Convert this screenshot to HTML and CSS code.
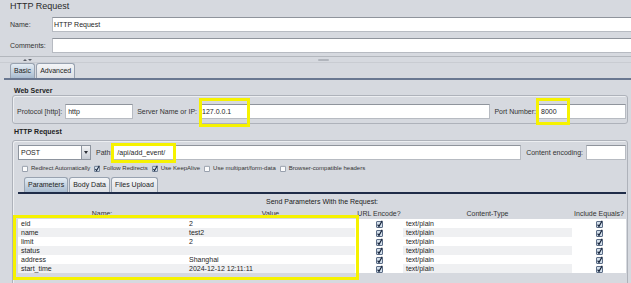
FILE: index.html
```html
<!DOCTYPE html>
<html lang="en">
<head>
  <meta charset="UTF-8">
  <title>HTTP Request</title>
  <link rel="stylesheet" href="styles.css">
</head>
<body>
  <svg class="defs" width="0" height="0">
    <symbol id="cb-on" viewBox="0 0 7 8">
      <rect x="0.5" y="1.5" width="6" height="6" rx="0.5" fill="#d3dfeb" stroke="#5d6e87"/>
      <path d="M1.6 4.6 L3 6.4 L6.2 0.8" fill="none" stroke="#15233a" stroke-width="1.2"/>
    </symbol>
    <symbol id="cb-off" viewBox="0 0 7 8">
      <rect x="0.5" y="1.5" width="6" height="6" rx="0.5" fill="#fbfbfc" stroke="#8a93a1"/>
    </symbol>
  </svg>

  <div class="page">
    <div class="title">HTTP Request</div>

    <div class="meta">
      <div class="meta-row"><span class="meta-label">Name:</span><div class="field">HTTP Request</div></div>
      <div class="meta-row"><span class="meta-label">Comments:</span><div class="field"></div></div>
    </div>

    <div class="divider">
      <span class="arrow up"></span><span class="arrow down"></span>
      <span class="grip"></span>
    </div>

    <div class="tabs top-tabs">
      <span class="tab active">Basic</span>
      <span class="tab">Advanced</span>
    </div>

    <div class="tab-body">
      <div class="group-title">Web Server</div>
      <div class="group server">
        <span class="lbl">Protocol [http]:</span>
        <div class="field protocol">http</div>
        <span class="lbl">Server Name or IP:</span>
        <div class="field host">127.0.0.1</div>
        <span class="lbl">Port Number:</span>
        <div class="field port">8000</div>
      </div>

      <div class="group-title second">HTTP Request</div>
      <div class="group request">
        <div class="req-row">
          <div class="combo"><span class="combo-text">POST</span><span class="combo-btn"><i></i></span></div>
          <span class="lbl path-lbl">Path:</span>
          <div class="field path">/api/add_event/</div>
          <span class="lbl enc-lbl">Content encoding:</span>
          <div class="field enc"></div>
        </div>

        <div class="options">
          <span class="opt"><svg class="cb"><use href="#cb-off"/></svg>Redirect Automatically</span>
          <span class="opt"><svg class="cb"><use href="#cb-on"/></svg>Follow Redirects</span>
          <span class="opt"><svg class="cb"><use href="#cb-on"/></svg>Use KeepAlive</span>
          <span class="opt"><svg class="cb"><use href="#cb-off"/></svg>Use multipart/form-data</span>
          <span class="opt"><svg class="cb"><use href="#cb-off"/></svg>Browser-compatible headers</span>
        </div>

        <div class="tabs sub-tabs">
          <span class="tab active">Parameters</span>
          <span class="tab">Body Data</span>
          <span class="tab">Files Upload</span>
        </div>

        <div class="caption">Send Parameters With the Request:</div>

        <table class="params">
          <colgroup>
            <col class="c-name"><col class="c-value"><col class="c-enc"><col class="c-type"><col class="c-eq">
          </colgroup>
          <thead>
            <tr><th>Name:</th><th>Value</th><th>URL Encode?</th><th>Content-Type</th><th>Include Equals?</th></tr>
          </thead>
          <tbody>
            <tr><td>eid</td><td>2</td><td class="chk"><svg class="cb"><use href="#cb-on"/></svg></td><td>text/plain</td><td class="chk"><svg class="cb"><use href="#cb-on"/></svg></td></tr>
            <tr><td>name</td><td>test2</td><td class="chk"><svg class="cb"><use href="#cb-on"/></svg></td><td>text/plain</td><td class="chk"><svg class="cb"><use href="#cb-on"/></svg></td></tr>
            <tr><td>limit</td><td>2</td><td class="chk"><svg class="cb"><use href="#cb-on"/></svg></td><td>text/plain</td><td class="chk"><svg class="cb"><use href="#cb-on"/></svg></td></tr>
            <tr><td>status</td><td></td><td class="chk"><svg class="cb"><use href="#cb-on"/></svg></td><td>text/plain</td><td class="chk"><svg class="cb"><use href="#cb-on"/></svg></td></tr>
            <tr><td>address</td><td>Shanghai</td><td class="chk"><svg class="cb"><use href="#cb-on"/></svg></td><td>text/plain</td><td class="chk"><svg class="cb"><use href="#cb-on"/></svg></td></tr>
            <tr><td>start_time</td><td>2024-12-12 12:11:11</td><td class="chk"><svg class="cb"><use href="#cb-on"/></svg></td><td>text/plain</td><td class="chk"><svg class="cb"><use href="#cb-on"/></svg></td></tr>
          </tbody>
        </table>
      </div>
    </div>

    <!-- yellow annotation boxes drawn over the screenshot -->
    <div class="mark mark-ip"></div>
    <div class="mark mark-port"></div>
    <div class="mark mark-path"></div>
    <div class="mark mark-table"></div>
  </div>
</body>
</html>
```

FILE: styles.css
```css
body {
  margin: 0;
  background-color: #d6d9df;
  font-family: "Liberation Sans", Arial, sans-serif;
  font-size: 7px;
  color: #1e1e1e;
  overflow: hidden;
}

.defs {
  position: absolute;
  width: 0;
  height: 0;
}

.page {
  position: relative;
  width: 631px;
  height: 283px;
  overflow: hidden;
}

.title {
  height: 14px;
  line-height: 13px;
  padding-left: 10px;
  font-size: 9px;
  color: #2a2a2a;
}

.meta {
  padding-top: 3px;
}

.meta-row {
  display: flex;
  align-items: center;
  height: 15px;
}

.meta-row + .meta-row {
  margin-top: 6px;
}

.meta-label {
  width: 42px;
  padding-left: 10px;
  color: #333;
}

.field {
  box-sizing: border-box;
  height: 15px;
  line-height: 13px;
  padding: 0 2px;
  background: #fff;
  border: 1px solid #b7bbc2;
  border-top-color: #8f949c;
  white-space: nowrap;
  overflow: hidden;
}

.meta .field {
  flex: 1;
  border-right: none;
  padding-left: 1px;
}

.divider {
  display: flex;
  align-items: center;
  height: 5px;
  margin-top: 3px;
  padding-left: 23px;
  border-top: 1px solid #b3b7bd;
  border-bottom: 1px solid #c9ccd2;
}

.arrow {
  width: 0;
  height: 0;
  border-left: 2px solid transparent;
  border-right: 2px solid transparent;
  margin-right: 1px;
}

.arrow.up {
  border-bottom: 2px solid #5a5f68;
}

.arrow.down {
  border-top: 2px solid #5a5f68;
}

.grip {
  width: 11px;
  height: 2px;
  margin-left: 285px;
  border-radius: 1px;
  background: #b1b5bc;
}

.tabs {
  display: flex;
  height: 15px;
  padding-left: 6px;
}

.top-tabs {
  margin-left: 4px;
  border-bottom: 2px solid #6a7891;
}

.tab {
  padding: 0 3px;
  margin-right: 1px;
  line-height: 14px;
  border: 1px solid #98a2b0;
  border-bottom: none;
  border-radius: 3px 3px 0 0;
  background: linear-gradient(#f4f5f7, #dcdfe4);
  color: #222;
}

.tab.active {
  background: linear-gradient(#e4ecf4, #a8bbcf);
}

.tab-body {
  margin-left: 4px;
  padding: 7px 3px 0 8px;
}

.group-title {
  height: 8px;
  line-height: 8px;
  padding-left: 2px;
  font-weight: bold;
  color: #222;
}

.group-title.second {
  margin: 4px 0;
}

.group {
  border: 1px solid #aeb2ba;
  border-radius: 3px;
  box-shadow: inset 1px 1px 0 #eceef1;
}

.lbl {
  color: #333;
  white-space: nowrap;
}

.server {
  display: flex;
  align-items: center;
  padding: 8px 1px 4px 4px;
}

.server .lbl {
  margin-right: 2px;
}

.protocol {
  width: 68px;
  margin-left: 1px;
  margin-right: 4px;
}

.host {
  flex: 1;
  margin-right: 4px;
}

.port {
  width: 88px;
}

.request {
  height: 200px;
  padding: 4px 1px 0 5px;
}

.req-row {
  display: flex;
  align-items: center;
}

.combo {
  box-sizing: border-box;
  display: flex;
  width: 73px;
  height: 15px;
  background: #fff;
  border: 1px solid #8d949e;
}

.combo-text {
  flex: 1;
  padding-left: 2px;
  line-height: 13px;
}

.combo-btn {
  display: flex;
  align-items: center;
  justify-content: center;
  width: 8px;
  border-left: 1px solid #8d949e;
  background: linear-gradient(#f2f3f5, #c6ccd4);
}

.combo-btn i {
  width: 0;
  height: 0;
  border-left: 2px solid transparent;
  border-right: 2px solid transparent;
  border-top: 3px solid #2b2f36;
}

.path-lbl {
  margin: 0 1px 0 5px;
}

.path {
  flex: 1;
  padding-left: 3px;
}

.enc-lbl {
  margin: 0 3px 0 5px;
}

.enc {
  width: 40px;
}

.options {
  display: flex;
  align-items: center;
  height: 10px;
  margin: 3px 0 4px 4px;
  font-size: 6px;
  color: #333;
}

.opt {
  display: flex;
  align-items: center;
  margin-right: 4px;
  white-space: nowrap;
}

.opt .cb {
  width: 6px;
  height: 7px;
  margin-right: 3px;
}

.sub-tabs {
  border-bottom: 2px solid #1f2c48;
}

.caption {
  height: 12px;
  margin-top: 2px;
  line-height: 12px;
  text-align: center;
  color: #222;
}

.params {
  width: 608px;
  border-collapse: collapse;
  table-layout: fixed;
}

.c-name { width: 168px; }
.c-value { width: 169px; }
.c-enc { width: 48px; }
.c-type { width: 169px; }
.c-eq { width: 54px; }

.params th {
  height: 11px;
  padding: 0;
  line-height: 11px;
  font-weight: normal;
  color: #333;
  white-space: nowrap;
}

.params td {
  height: 9px;
  padding: 0 0 0 3px;
  line-height: 9px;
  background: #fff;
  white-space: nowrap;
  overflow: hidden;
}

.params tbody tr:nth-child(even) td {
  background: #eff0f2;
}

.params td.chk,
.params tbody tr:nth-child(even) td.chk {
  padding: 0;
  background: #fff;
}

.chk .cb {
  display: block;
  width: 7px;
  height: 8px;
  margin: 0 auto;
}

.mark {
  position: absolute;
  box-sizing: border-box;
  border: 3px solid #f6f200;
}

.mark-ip {
  left: 199px;
  top: 98px;
  width: 51px;
  height: 29px;
}

.mark-port {
  left: 536px;
  top: 98px;
  width: 34px;
  height: 27px;
}

.mark-path {
  left: 111px;
  top: 143px;
  width: 65px;
  height: 20px;
}

.mark-table {
  left: 13px;
  top: 215px;
  width: 346px;
  height: 65px;
}
```
